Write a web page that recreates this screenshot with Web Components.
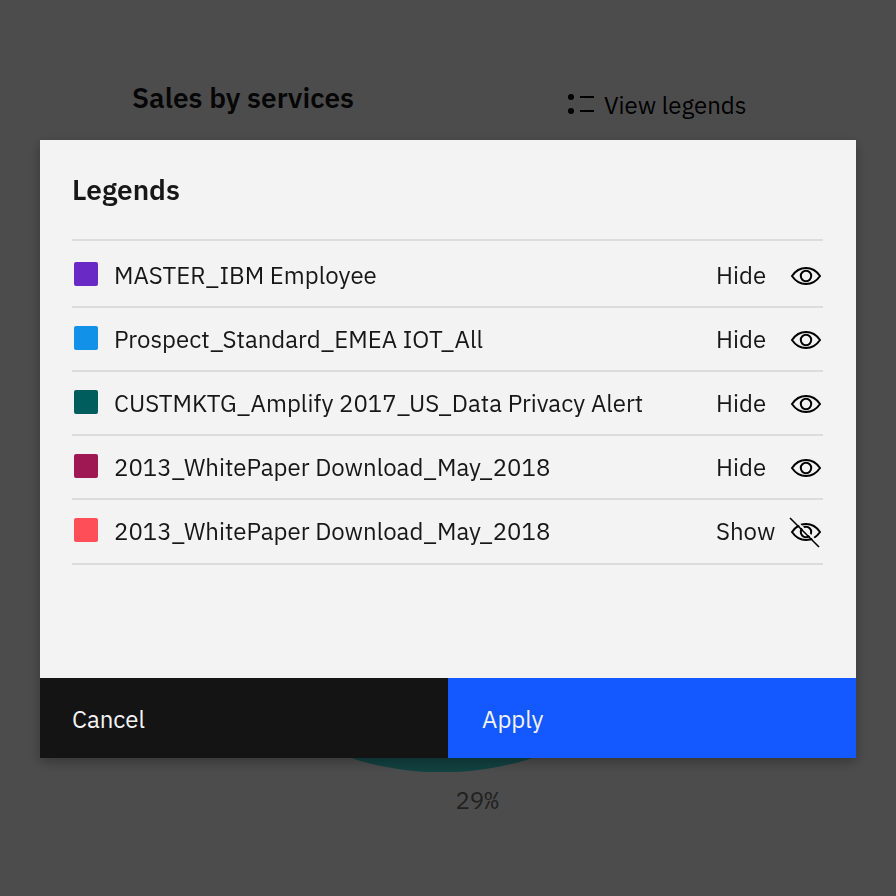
<!DOCTYPE html>
<html lang="en">
<head>
<meta charset="utf-8">
<title>Sales by services</title>
<style>
html, body { height: 100%; }
body { margin: 0; background: #fff; color: #171717; font: 24px/32px "IBM Plex Sans", Roboto, "Liberation Sans", sans-serif; }
</style>
</head>
<body>
<service-chart heading="Sales by services" value="29%"></service-chart>
<legend-dialog heading="Legends">
  <legend-item color="#6929c4">MASTER_IBM Employee</legend-item>
  <legend-item color="#1192e8">Prospect_Standard_EMEA IOT_All</legend-item>
  <legend-item color="#005d5d">CUSTMKTG_Amplify 2017_US_Data Privacy Alert</legend-item>
  <legend-item color="#9f1853">2013_WhitePaper Download_May_2018</legend-item>
  <legend-item color="#fe4f58" off>2013_WhitePaper Download_May_2018</legend-item>
</legend-dialog>
<script>
class ServiceChart extends HTMLElement {
  connectedCallback() {
    this.attachShadow({ mode: "open" }).innerHTML = `
      <style>
        :host { display: block; }
        header { display: grid; grid-template-columns: 1fr 328px; align-items: start; padding: 82px 0 0 132px; }
        h1 { margin: 0; font-size: 28px; line-height: 32px; font-weight: 600; }
        button { display: flex; align-items: flex-start; gap: 8px; margin: 7px 0 0; padding: 0; border: 0; background: none; color: #000; font: inherit; }
        figure { margin: 68px 12px 0 0; display: grid; justify-items: center; gap: 12px; }
        figure svg { width: 66%; max-width: 586px; }
        figcaption { padding-left: 70px; color: #6f6f6f; font-family: "IBM Plex Mono", "Liberation Mono", monospace; }
      </style>
      <header>
        <h1></h1>
        <button type="button">
          <svg width="28" height="28" viewBox="0 0 28 28" aria-hidden="true"><circle cx="3" cy="8" r="3"/><circle cx="3" cy="22" r="3"/><path d="M12 8h14M12 22h14" stroke="#000" stroke-width="2"/></svg>
          View legends
        </button>
      </header>
      <figure>
        <svg viewBox="0 0 100 100" aria-hidden="true"><circle cx="50" cy="50" r="50" fill="#3ddbd9"/></svg>
        <figcaption></figcaption>
      </figure>`;
    this.shadowRoot.querySelector("h1").textContent = this.getAttribute("heading");
    this.shadowRoot.querySelector("figcaption").textContent = this.getAttribute("value");
  }
}

const EYE = `<path d="M2 16C5.500 10.800 10.500 8 16 8S26.500 10.800 30 16C26.500 21.200 21.500 24 16 24S5.500 21.200 2 16Z"/><circle cx="16" cy="16" r="5.200"/>`;
const SLASH = `<path d="M3 2L32 31" stroke="#f3f3f3" stroke-width="2"/><path d="M0 2L29 31" stroke-width="1.600"/>`;

class LegendItem extends HTMLElement {
  connectedCallback() {
    const off = this.hasAttribute("off");
    this.attachShadow({ mode: "open" }).innerHTML = `
      <style>
        :host { display: grid; grid-template-columns: 24px 1fr 107px; column-gap: 16px; align-items: center; min-height: 62px; padding-left: 2px; border-bottom: 2px solid #dcdcdc; }
        :host(:last-child) { padding-bottom: 1px; }
        i { width: 24px; height: 24px; margin-bottom: 2px; border-radius: 2px; background: ${this.getAttribute("color")}; }
        button { display: grid; grid-template-columns: 1fr 32px; align-items: center; padding: 0 1px 0 0; border: 0; background: none; color: inherit; font: inherit; text-align: left; }
        svg { display: block; margin-top: 2px; fill: none; stroke: #000; stroke-width: 2; overflow: visible; }
      </style>
      <i></i><span><slot></slot></span>
      <button type="button">${off ? "Show" : "Hide"}<svg width="32" height="32" viewBox="0 0 32 32" aria-hidden="true">${EYE}${off ? SLASH : ""}</svg></button>`;
    this.setAttribute("role", "listitem");
  }
}

class LegendDialog extends HTMLElement {
  connectedCallback() {
    this.attachShadow({ mode: "open" }).innerHTML = `
      <style>
        :host { position: fixed; inset: 0; display: grid; align-content: start; padding: 140px 40px 40px; background: rgba(0,0,0,.7); }
        section { display: flex; flex-direction: column; min-height: 618px; background: #f3f3f3; box-shadow: 0 4px 12px rgba(0,0,0,.3); }
        h2 { margin: 0; padding: 34px 32px 33px; font-size: 28px; line-height: 32px; font-weight: 600; }
        .list { flex: 1; margin: 0 33px 0 32px; }
        .list::before { content: ""; display: block; border-top: 2px solid #dcdcdc; margin-bottom: 3px; }
        footer { display: grid; grid-template-columns: 1fr 1fr; }
        button { padding: 25px 34px 23px; border: 0; background: #1459ff; color: #f3f3f3; font: inherit; text-align: left; }
        .cancel { padding-left: 32px; background: #141414; }
      </style>
      <section role="dialog" aria-modal="true" aria-labelledby="t">
        <h2 id="t"></h2>
        <div class="list" role="list"><slot></slot></div>
        <footer><button type="button" class="cancel">Cancel</button><button type="button">Apply</button></footer>
      </section>`;
    this.shadowRoot.querySelector("h2").textContent = this.getAttribute("heading");
  }
}
customElements.define("service-chart", ServiceChart);
customElements.define("legend-item", LegendItem);
customElements.define("legend-dialog", LegendDialog);
</script>
</body>
</html>
